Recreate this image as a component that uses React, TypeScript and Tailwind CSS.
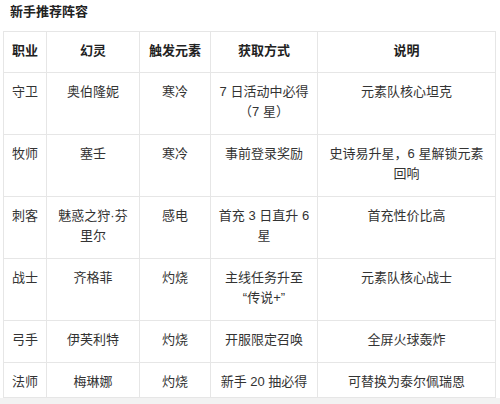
import * as React from 'react';

type Row = {
  job: string;
  hero: string;
  element: string;
  source: string;
  note: string;
};

// \u200B lets the line break before the opening quote, like the original
const rows: Row[] = [
  { job: '守卫', hero: '奥伯隆妮', element: '寒冷', source: '7 日活动中必得（7 星）', note: '元素队核心坦克' },
  { job: '牧师', hero: '塞壬', element: '寒冷', source: '事前登录奖励', note: '史诗易升星，6 星解锁元素回响' },
  { job: '刺客', hero: '魅惑之狩·芬里尔', element: '感电', source: '首充 3 日直升 6 星', note: '首充性价比高' },
  { job: '战士', hero: '齐格菲', element: '灼烧', source: '主线任务升至\u200B“传说+”', note: '元素队核心战士' },
  { job: '弓手', hero: '伊芙利特', element: '灼烧', source: '开服限定召唤', note: '全屏火球轰炸' },
  { job: '法师', hero: '梅琳娜', element: '灼烧', source: '新手 20 抽必得', note: '可替换为泰尔佩瑞恩' },
];

const headers = ['职业', '幻灵', '触发元素', '获取方式', '说明'];

const App = () => {
  return (
    <div
      className="h-[404px] w-[500px] overflow-hidden bg-white text-[13px] leading-[20px] text-[#333]"
      style={{ fontFamily: '"Liberation Sans", "Noto Sans CJK SC", sans-serif' }}
    >
      <div className="h-[398px] overflow-hidden">
        <h2 className="mt-[2px] pl-[10px] text-[13px] font-bold leading-[20px] text-[#222]">新手推荐阵容</h2>
        <table className="ml-[3px] mt-[9px] w-[492px] table-fixed border-collapse">
          <colgroup>
            <col className="w-[43px]" />
            <col className="w-[93px]" />
            <col className="w-[71px]" />
            <col className="w-[107px]" />
            <col className="w-[178px]" />
          </colgroup>
          <thead>
            <tr>
              {headers.map((h) => (
                <th
                  key={h}
                  className="border border-[#e6e6e6] px-[6px] pb-[11px] pt-[9px] text-center align-top font-bold text-[#222]"
                >
                  {h}
                </th>
              ))}
            </tr>
          </thead>
          <tbody>
            {rows.map((r, i) => {
              const last = i === rows.length - 1;
              const cell = last
                ? 'border border-[#e6e6e6] px-[6px] pb-[5px] pt-[9px] text-center align-top'
                : 'border border-[#e6e6e6] px-[6px] pb-[12px] pt-[9px] text-center align-top';
              return (
                <tr key={r.job}>
                  <td className={cell}>{r.job}</td>
                  <td className={cell}>{r.hero}</td>
                  <td className={cell}>{r.element}</td>
                  <td className={cell}>{r.source}</td>
                  <td className={cell}>{r.note}</td>
                </tr>
              );
            })}
          </tbody>
        </table>
      </div>
      <div className="h-[6px] bg-[#f2f2f2]" />
    </div>
  );
};

export default App;
